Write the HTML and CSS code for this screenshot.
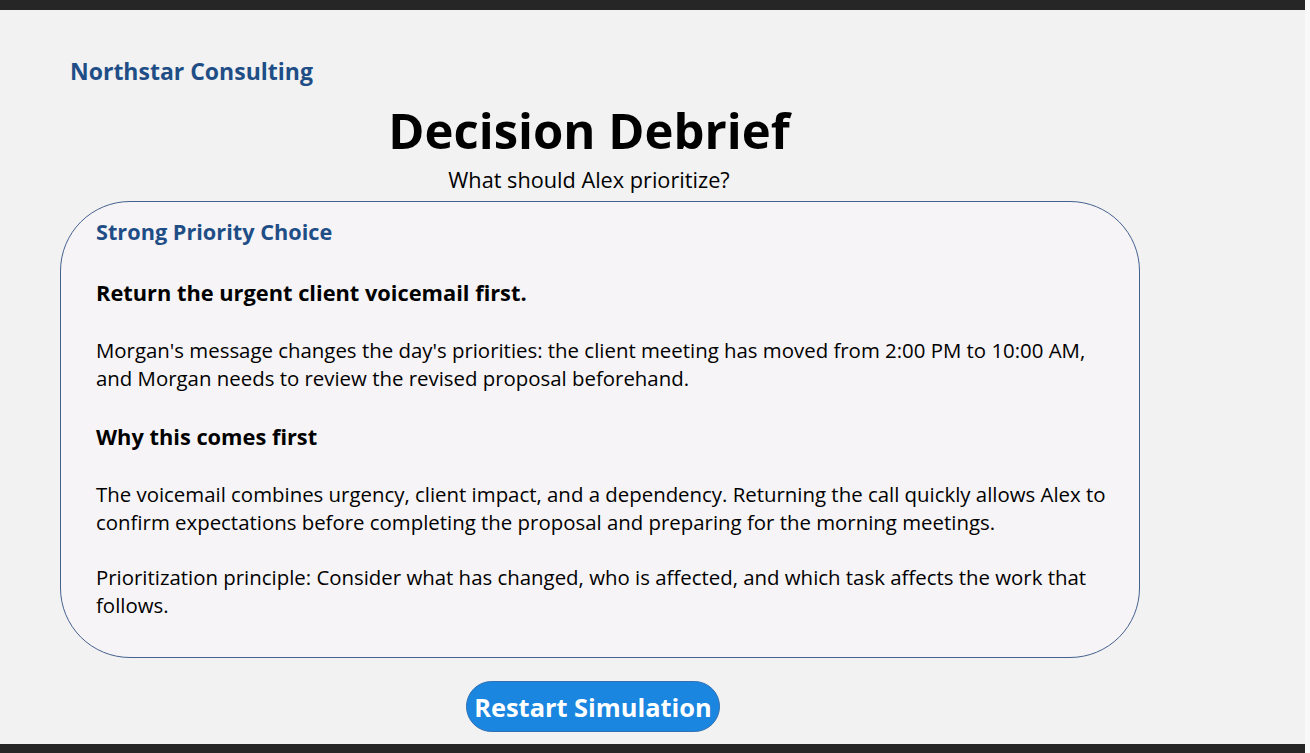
FILE: index.html
```html
<!DOCTYPE html>
<html lang="en">
<head>
    <meta charset="UTF-8">
    <meta name="viewport" content="width=device-width, initial-scale=1.0">
    <title>Decision Debrief</title>
    <link rel="stylesheet" href="styles.css">
</head>
<body>
    <div id="app">
        <div class="frame-bar"></div>
        <div id="screen">
            <div id="brand">Northstar Consulting</div>
            <div class="heading">
                <h1 id="title">Decision Debrief</h1>
                <div id="subtitle">What should Alex prioritize?</div>
            </div>
            <div id="feedback-box">
                <div id="rating">Strong Priority Choice</div>
                <h2 class="box-head">Return the urgent client voicemail first.</h2>
                <p>Morgan's message changes the day's priorities: the client meeting has moved from 2:00 PM to 10:00 AM, and Morgan needs to review the revised proposal beforehand.</p>
                <h2 class="box-head">Why this comes first</h2>
                <p>The voicemail combines urgency, client impact, and a dependency. Returning the call quickly allows Alex to confirm expectations before completing the proposal and preparing for the morning meetings.</p>
                <p>Prioritization principle: Consider what has changed, who is affected, and which task affects the work that follows.</p>
            </div>
            <div class="button-row">
                <button id="restart-btn">Restart Simulation</button>
            </div>
        </div>
        <div class="frame-bar"></div>
    </div>
</body>
</html>
```

FILE: styles.css
```css
html {
    background-color: #f9f9f9;
}

body {
    font-family: "Open Sans", Arial, sans-serif;
    margin: 0;
    padding: 0;
    color: #000000;
}

#app {
    width: 1305px;
    height: 100vh;
    display: flex;
    flex-direction: column;
    background-color: #f2f2f2;
}

.frame-bar {
    height: 10px;
    background-color: #262626;
    flex-shrink: 0;
}

.frame-bar:last-child {
    height: 9px;
}

#screen {
    flex: 1;
    padding: 0 60px;
    overflow: hidden;
}

#brand {
    margin: 46px 0 0 10px;
    font-size: 23px;
    font-weight: bold;
    color: #1f4e87;
    line-height: 30px;
}

.heading {
    width: 1058px;
    text-align: center;
}

#title {
    margin: 12px 0 0 0;
    font-size: 49px;
    line-height: 64px;
    font-weight: bold;
}

#subtitle {
    font-size: 21.7px;
    line-height: 28px;
    margin-top: 4px;
}

#feedback-box {
    box-sizing: border-box;
    width: 1080px;
    height: 457px;
    margin-top: 7px;
    padding: 16px 24px 0 35px;
    background-color: #f6f4f6;
    border: 1px solid #45618f;
    border-radius: 70px;
}

#rating {
    font-size: 21.7px;
    font-weight: bold;
    color: #1f4e87;
    line-height: 28px;
}

.box-head {
    font-size: 21.8px;
    font-weight: bold;
    line-height: 28px;
    margin: 33px 0 0 0;
}

#feedback-box p {
    font-size: 20.4px;
    line-height: 28px;
    margin: 29px 0 0 0;
}

#feedback-box p + .box-head {
    margin-top: 31px;
}

#feedback-box p + p {
    margin-top: 27px;
}

.button-row {
    width: 1066px;
    text-align: center;
}

#restart-btn {
    margin-top: 23px;
    font-family: "Open Sans", Arial, sans-serif;
    font-size: 25.4px;
    font-weight: bold;
    color: #ffffff;
    background-color: #1a86e0;
    border: 1px solid #2f6fb2;
    border-radius: 26px;
    padding: 0 7px;
    height: 51px;
    cursor: pointer;
}
```
